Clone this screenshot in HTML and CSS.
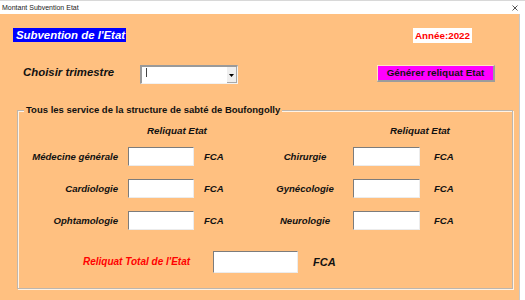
FILE: index.html
```html
<!DOCTYPE html>
<html lang="fr">
<head>
<meta charset="utf-8">
<title>Montant Subvention Etat</title>
<link rel="stylesheet" href="styles.css">
</head>
<body>
<div class="window">
  <div class="titlebar">
    <span class="title">Montant Subvention Etat</span>
    <svg class="close" width="6" height="6" viewBox="0 0 6 6"><path d="M0.5 0.5L5.5 5.5M5.5 0.5L0.5 5.5" stroke="#555" stroke-width="1" fill="none"/></svg>
  </div>
  <div class="form">
    <div class="top-row">
      <div class="blue-label">Subvention de l'Etat</div>
      <div class="year">Année:2022</div>
    </div>
    <div class="trim-row">
      <div class="trim-label">Choisir trimestre</div>
      <div class="combo">
        <span class="caret"></span>
        <span class="drop"><svg width="5" height="3" viewBox="0 0 5 3"><path d="M0 0H5L2.5 3Z" fill="#000"/></svg></span>
      </div>
      <div class="gen-btn">Générer reliquat Etat</div>
    </div>
    <fieldset class="services">
      <legend>Tous les service de la structure de sabté de Boufongolly</legend>
      <div class="headers">
        <span class="head h-left">Reliquat Etat</span>
        <span class="head h-right">Reliquat Etat</span>
      </div>
      <div class="grid">
        <span class="lab lab-left">Médecine générale</span>
        <span class="tb"></span>
        <span class="fca fca-left">FCA</span>
        <span class="lab lab-right">Chirurgie</span>
        <span class="tb tb-right"></span>
        <span class="fca fca-right">FCA</span>

        <span class="lab lab-left">Cardiologie</span>
        <span class="tb"></span>
        <span class="fca fca-left">FCA</span>
        <span class="lab lab-right">Gynécologie</span>
        <span class="tb tb-right"></span>
        <span class="fca fca-right">FCA</span>

        <span class="lab lab-left">Ophtamologie</span>
        <span class="tb"></span>
        <span class="fca fca-left">FCA</span>
        <span class="lab lab-right">Neurologie</span>
        <span class="tb tb-right"></span>
        <span class="fca fca-right">FCA</span>
      </div>
      <div class="total-row">
        <span class="total-label">Reliquat Total de l'Etat</span>
        <span class="tb tb-total"></span>
        <span class="fca fca-total">FCA</span>
      </div>
    </fieldset>
  </div>
</div>
</body>
</html>
```

FILE: styles.css
```css
html, body {
  margin: 0;
  padding: 0;
  background: #ffffff;
}

body {
  width: 525px;
  height: 300px;
  overflow: hidden;
  font-family: "Liberation Sans", Arial, sans-serif;
}

.window {
  width: 525px;
  height: 300px;
  display: flex;
  flex-direction: column;
}

.titlebar {
  height: 14px;
  background: #ffffff;
  display: flex;
  align-items: center;
  justify-content: space-between;
  padding: 0 7px 0 2px;
  box-sizing: border-box;
  border-top: 1px solid #d8d8d8;
}

.title {
  font-size: 7px;
  line-height: 13px;
  color: #222;
}

.close {
  display: block;
  margin-top: 1px;
}

.form {
  width: 520px;
  height: 286px;
  background: #ffc080;
  border-right: 1px solid #c9c9c9;
  padding-top: 14px;
  box-sizing: border-box;
}

.top-row {
  display: flex;
  align-items: flex-start;
  height: 15px;
}

.blue-label {
  margin-left: 13px;
  width: 113px;
  height: 14px;
  box-sizing: border-box;
  padding-left: 3px;
  background: #0000ff;
  color: #ffffff;
  font-weight: bold;
  font-style: italic;
  font-size: 11.4px;
  line-height: 14px;
  white-space: nowrap;
}

.year {
  margin-left: auto;
  margin-right: 47px;
  width: 59px;
  height: 15px;
  background: #ffffff;
  color: #ff0000;
  font-weight: bold;
  font-size: 9.8px;
  line-height: 15px;
  text-align: center;
  white-space: nowrap;
}

.trim-row {
  display: flex;
  align-items: flex-start;
  margin-top: 22px;
  height: 19px;
}

.trim-label {
  margin-left: 23px;
  width: 117px;
  font-weight: bold;
  font-style: italic;
  font-size: 11.4px;
  line-height: 14px;
  color: #111;
  white-space: nowrap;
}

.combo {
  width: 98px;
  height: 19px;
  box-sizing: border-box;
  background: #ffffff;
  border-style: solid;
  border-width: 2px 1px 1px 2px;
  border-color: #9a9a9a #f2f2f2 #f2f2f2 #9a9a9a;
  display: flex;
  align-items: stretch;
}

.caret {
  width: 1px;
  height: 9px;
  margin: 1px 0 0 4px;
  background: #444;
}

.drop {
  margin-left: auto;
  width: 10px;
  background: #efefef;
  border-right: 1px solid #a8a8a8;
  border-bottom: 1px solid #a8a8a8;
  box-sizing: border-box;
  display: flex;
  align-items: center;
  justify-content: center;
}

.drop svg {
  display: block;
  margin-top: 2px;
}

.gen-btn {
  margin-left: auto;
  margin-right: 24px;
  width: 118px;
  height: 17px;
  box-sizing: border-box;
  background: #ff00ff;
  border-style: solid;
  border-width: 1px 2px 2px 1px;
  border-color: #ffe2c4 #9c9c9c #9c9c9c #ffe2c4;
  font-weight: bold;
  font-size: 9.9px;
  line-height: 14px;
  text-align: center;
  color: #111;
  white-space: nowrap;
}

.services {
  margin: 20px 0 0 17px;
  padding: 8px 0 0 0;
  width: 496px;
  height: 185px;
  box-sizing: border-box;
  min-width: 0;
  border: 1px solid #bdb6ae;
  box-shadow: inset 1px 1px 0 #fff3e6, 1px 1px 0 #fff3e6;
}

.services legend {
  margin-left: 6px;
  padding: 0 2px;
  background: #ffc080;
  font-weight: bold;
  font-size: 9.5px;
  line-height: 12px;
  color: #111;
  white-space: nowrap;
}

.headers,
.grid {
  display: grid;
  grid-template-columns: 110px 66px 76px 83px 67px 1fr;
}

.headers {
  height: 14px;
  margin-bottom: 9px;
}

.head {
  font-weight: bold;
  font-style: italic;
  font-size: 9.8px;
  line-height: 14px;
  color: #111;
  white-space: nowrap;
}

.h-left {
  grid-column: 2 / span 2;
  padding-left: 19px;
}

.h-right {
  grid-column: 5 / span 2;
  padding-left: 37px;
}

.grid {
  grid-auto-rows: 19px;
  row-gap: 13px;
}

.lab,
.fca,
.total-label {
  font-weight: bold;
  font-style: italic;
  font-size: 9.6px;
  line-height: 19px;
  color: #111;
  white-space: nowrap;
}

.lab-left {
  text-align: right;
  padding-right: 10px;
}

.lab-right {
  text-align: center;
  padding-right: 13px;
}

.tb {
  display: block;
  background: #ffffff;
  box-sizing: border-box;
  border-style: solid;
  border-width: 1px;
  border-color: #7c7c7c #ececec #ececec #7c7c7c;
}

.fca-left {
  padding-left: 10px;
}

.fca-right {
  padding-left: 14px;
}

.total-row {
  display: flex;
  align-items: center;
  margin-top: 21px;
  height: 22px;
  padding-left: 65px;
}

.total-label {
  width: 130px;
  color: #ff0000;
  font-size: 10px;
  line-height: 22px;
}

.tb-total {
  width: 85px;
  height: 22px;
}

.fca-total {
  margin-left: 15px;
  font-size: 11px;
  line-height: 22px;
}
```
